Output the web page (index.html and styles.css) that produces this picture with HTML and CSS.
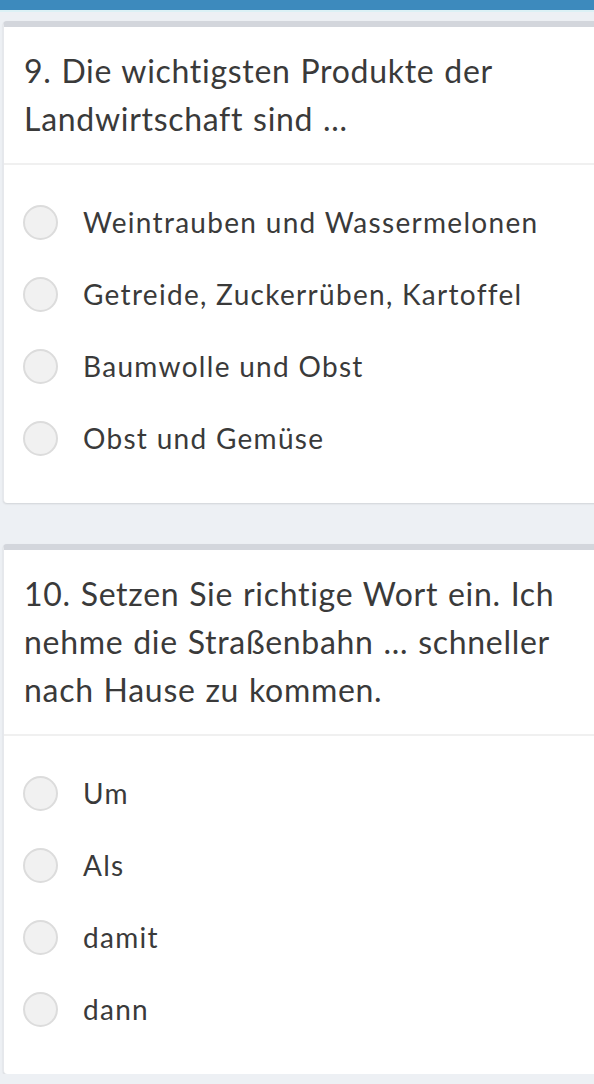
FILE: index.html
```html
<!DOCTYPE html>
<html lang="de">
<head>
<meta charset="utf-8">
<title>Quiz</title>
<link rel="stylesheet" href="styles.css">
</head>
<body>
<div class="topbar"></div>
<div class="topline"></div>
<main class="page">
  <section class="card">
    <div class="question">9. Die wichtigsten Produkte der Landwirtschaft sind …</div>
    <div class="options">
      <label class="option"><span class="radio"></span><span class="label">Weintrauben und Wassermelonen</span></label>
      <label class="option"><span class="radio"></span><span class="label">Getreide, Zuckerrüben, Kartoffel</span></label>
      <label class="option"><span class="radio"></span><span class="label">Baumwolle und Obst</span></label>
      <label class="option"><span class="radio"></span><span class="label">Obst und Gemüse</span></label>
    </div>
  </section>
  <section class="card">
    <div class="question">10. Setzen Sie richtige Wort ein. Ich nehme die Straßenbahn … schneller nach Hause zu kommen.</div>
    <div class="options">
      <label class="option"><span class="radio"></span><span class="label">Um</span></label>
      <label class="option"><span class="radio"></span><span class="label">Als</span></label>
      <label class="option"><span class="radio"></span><span class="label">damit</span></label>
      <label class="option"><span class="radio"></span><span class="label">dann</span></label>
    </div>
  </section>
</main>
</body>
</html>
```
FILE: styles.css
```css
html, body {
  margin: 0;
  padding: 0;
}
body {
  background: #edf0f4;
  font-family: "Lato", "Open Sans", sans-serif;
  color: #3a3a3a;
  overflow: hidden;
}
.topbar {
  height: 10px;
  background: #3d8abd;
}
.topline {
  height: 2px;
  background: #dcf1f5;
}
.page {
  padding: 9px 0 0 3px;
  display: flex;
  flex-direction: column;
  gap: 41px;
}
.card {
  background: #fff;
  border-top: 6px solid #d3d6dc;
  border-left: 1px solid #e6e8ec;
  border-radius: 4px 0 0 4px;
  margin-right: -12px;
  box-shadow: 0 1px 2px rgba(0,0,0,0.12);
}
.question {
  padding: 20px 24px 20px 20px;
  font-size: 32px;
  line-height: 48px;
  border-bottom: 2px solid #f0f0f0;
  letter-spacing: 0.7px;
  word-spacing: 1px;
}
.options {
  padding: 21px 0 29px 19px;
  display: flex;
  flex-direction: column;
}
.option {
  height: 72px;
  display: flex;
  align-items: center;
  gap: 25px;
}
.radio {
  width: 31px;
  height: 31px;
  border: 2px solid #dcdcdc;
  border-radius: 50%;
  background: #f1f1f1;
  flex: none;
}
.label {
  font-size: 28px;
  letter-spacing: 1.3px;
}
```
